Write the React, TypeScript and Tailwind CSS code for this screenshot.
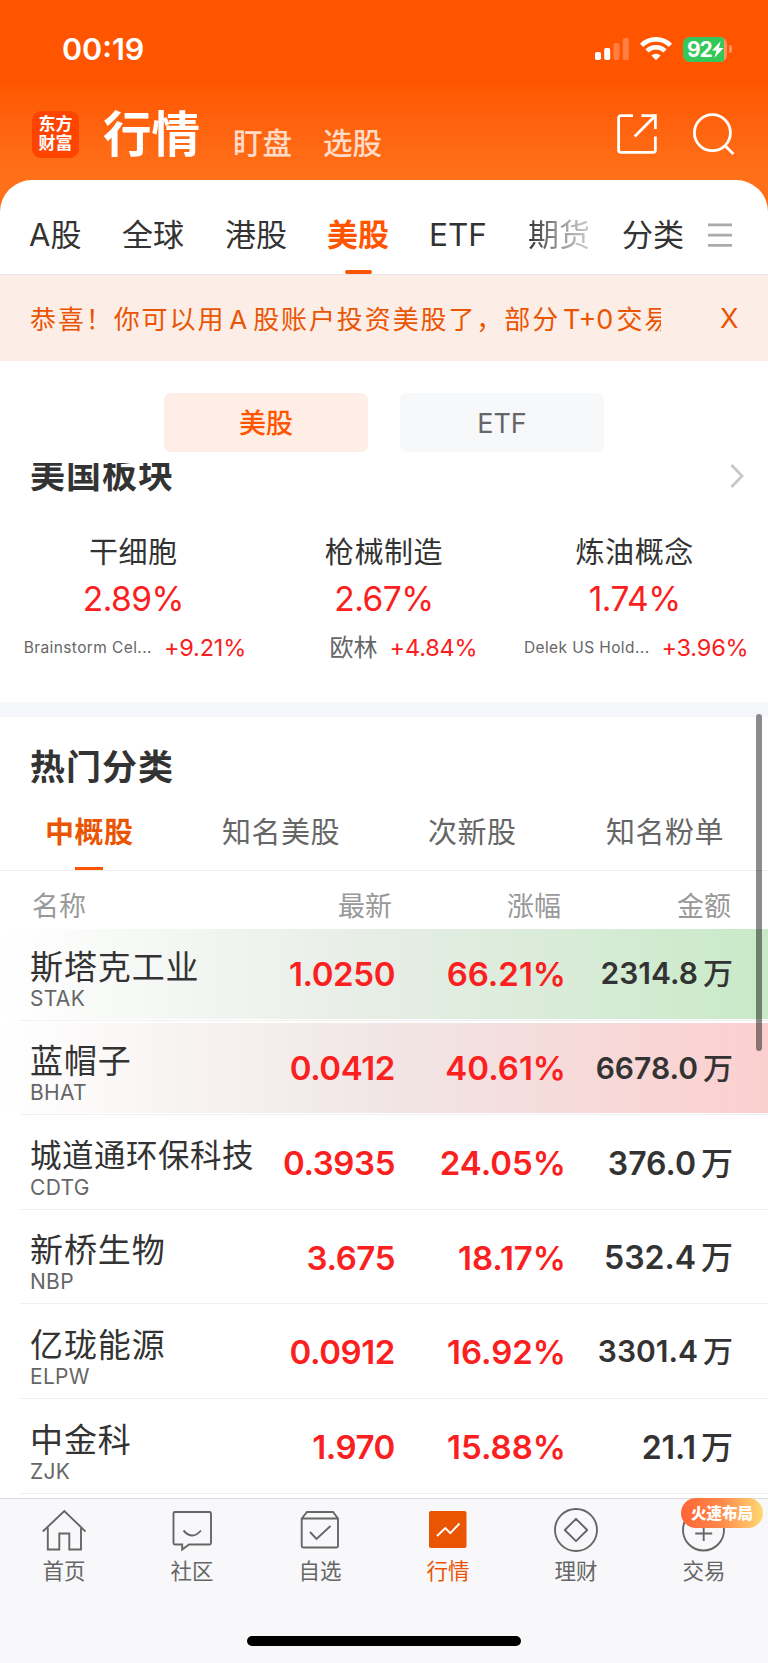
import React from "react";
import clsx from "clsx";

interface Sector {
  name: string;
  change: string;
  leader: string;
  leaderChange: string;
  smallLeader?: boolean;
}

interface Stock {
  name: string;
  code: string;
  price: string;
  change: string;
  amount: string;
  flash?: "up" | "down";
}

const sectors: Sector[] = [
  { name: "干细胞", change: "2.89%", leader: "Brainstorm Cel...", leaderChange: "+9.21%", smallLeader: true },
  { name: "枪械制造", change: "2.67%", leader: "欧林", leaderChange: "+4.84%" },
  { name: "炼油概念", change: "1.74%", leader: "Delek US Hold...", leaderChange: "+3.96%", smallLeader: true },
];

const stocks: Stock[] = [
  { name: "斯塔克工业", code: "STAK", price: "1.0250", change: "66.21%", amount: "2314.8", flash: "down" },
  { name: "蓝帽子", code: "BHAT", price: "0.0412", change: "40.61%", amount: "6678.0", flash: "up" },
  { name: "城道通环保科技", code: "CDTG", price: "0.3935", change: "24.05%", amount: "376.0" },
  { name: "新桥生物", code: "NBP", price: "3.675", change: "18.17%", amount: "532.4" },
  { name: "亿珑能源", code: "ELPW", price: "0.0912", change: "16.92%", amount: "3301.4" },
  { name: "中金科", code: "ZJK", price: "1.970", change: "15.88%", amount: "21.1" },
];

function StatusBar() {
  return (
    <div className="flex h-[98px] items-center justify-between pl-[62px] pr-9 text-white">
      <span className="text-[30.5px] font-semibold">00:19</span>
      <div className="flex items-center">
        <svg width="34" height="24" viewBox="0 0 34 24" fill="#fff">
          <rect x="0" y="15" width="6" height="8" rx="1.8" />
          <rect x="9.2" y="11" width="6" height="12" rx="1.8" />
          <rect x="18.5" y="6" width="6" height="17" rx="1.8" opacity=".25" />
          <rect x="27.8" y="1" width="6" height="22" rx="1.8" opacity=".25" />
        </svg>
        <svg className="ml-[11px]" width="32" height="24" viewBox="0 0 32 24" fill="none" stroke="#fff" strokeWidth="4.6">
          <path d="M1.6 8.3a20.5 20.5 0 0 1 28.8 0" />
          <path d="M7 13.9a12.8 12.8 0 0 1 18 0" />
          <path d="M16 23.2l-4.6-4.6a6.5 6.5 0 0 1 9.2 0z" fill="#fff" stroke="none" />
        </svg>
        <div className="ml-[11px] flex h-[25px] w-[44px] items-center overflow-hidden rounded-[7px] bg-[#ff9360]">
          <div className="flex h-full w-[41px] items-center bg-[#34c759] pl-[4px]">
            <span className="text-[21px] font-bold leading-none tracking-[-1.2px]">92</span>
            <svg className="ml-px" width="12" height="17" viewBox="0 0 12 17" fill="#fff">
              <path d="M9 0L0 9.6h4.6L2.6 17 12 7H7.2z" />
            </svg>
          </div>
        </div>
        <div className="ml-[2px] h-2 w-[3px] rounded-r-full bg-[#ff9360]" />
      </div>
    </div>
  );
}

function TitleBar() {
  return (
    <div className="flex h-[72px] items-center pl-8 pr-[33px] text-white">
      <div className="flex h-[47px] w-[47px] flex-col items-center justify-center rounded-[9px] bg-[#ff4400] text-[17px] font-bold leading-[19.5px]">
        <span>东方</span>
        <span>财富</span>
      </div>
      <h1 className="ml-[24px] mt-[2px] text-[48.5px] font-bold leading-none">行情</h1>
      <span className="ml-[33px] mt-[19px] text-[29.5px] font-medium leading-none text-[#ffdcc8]">盯盘</span>
      <span className="ml-[31px] mt-[19px] text-[29.5px] font-medium leading-none text-[#ffdcc8]">选股</span>
      <svg className="ml-auto" width="40" height="40" viewBox="0 0 40 40" fill="none" stroke="#fff" strokeWidth="2.8">
        <path d="M16 1.6H4A2.4 2.4 0 0 0 1.6 4v32A2.4 2.4 0 0 0 4 38.4h32a2.4 2.4 0 0 0 2.4-2.4V22.5" />
        <path d="M24.5 1.6h13.9V15M38 2L17.7 22.5" />
      </svg>
      <svg className="ml-[36px]" width="42" height="42" viewBox="0 0 42 42" fill="none" stroke="#fff" strokeWidth="2.8">
        <circle cx="19.4" cy="19.7" r="18" />
        <path d="M31.8 32.6l8.6 8.4" />
      </svg>
    </div>
  );
}

function MarketTabs() {
  return (
    <nav className="relative flex h-[95px] items-center border-b border-[#e5e5ea] pl-[29px] pt-[15px] text-[31px] leading-none text-[#333]">
      <span className="w-[93px]">A股</span>
      <span className="w-[103px]">全球</span>
      <span className="w-[102px]">港股</span>
      <span className="w-[102px] font-bold text-[#ff5500]">美股</span>
      <span className="w-[99px] text-[31.5px]">ETF</span>
      <span className="w-[94px]">
        <span className="bg-linear-to-r from-[#333] via-[#999] to-[#ccc] bg-clip-text text-transparent">期货</span>
      </span>
      <span className="w-[86px]">分类</span>
      <svg width="24" height="24" viewBox="0 0 24 24" stroke="#aaa" strokeWidth="2.8">
        <path d="M0 1.9h24M0 12.2h24M0 22.4h24" />
      </svg>
      <i className="absolute bottom-0 left-[345px] h-1 w-[27px] rounded-sm bg-[#ff5500]" />
    </nav>
  );
}

function PromoBanner() {
  return (
    <div className="flex h-[86px] items-center bg-[#fcede6] pl-[30px] pt-[3px] text-[#ea5504]">
      <p className="w-[631px] overflow-hidden whitespace-nowrap text-[26px] leading-[40px] tracking-[1.9px]">
        恭喜！你可以用<span className="mx-[4px]">A</span>股账户投资美股了，部分
        <span className="mx-[3px] text-[27px] tracking-[0px]">T+0</span>交易
      </p>
      <span className="ml-[59px] text-[27px]">X</span>
    </div>
  );
}

function SectorBoard() {
  return (
    <section className="h-[239px] overflow-hidden">
      <div className="-mt-[5px] flex h-[35px] items-center justify-between pl-[30px] pr-6">
        <h2 className="text-[35px] font-bold leading-[35px] tracking-[1px] text-[#333]">美国板块</h2>
        <svg width="14" height="26" viewBox="0 0 14 26" fill="none" stroke="#c8c8c8" strokeWidth="2.8">
          <path d="M1.5 2L12 13 1.5 24" />
        </svg>
      </div>
      <div className="mt-[39px] grid grid-cols-3 px-2 text-center">
        {sectors.map((s) => (
          <div key={s.name}>
            <div className="text-[29px] leading-[42px] tracking-[0.6px] text-[#333]">{s.name}</div>
            <div className="text-[33.5px] leading-[50px] tracking-[-0.5px] text-[#fa2020]">{s.change}</div>
            <div
              className={clsx(
                "mt-[4px] flex h-10 items-center justify-center whitespace-nowrap",
                s.smallLeader ? "pl-[3px]" : "pl-[39px]"
              )}
            >
              <span className={clsx("text-[#666]", s.smallLeader ? "text-[15.5px] tracking-[0.4px]" : "text-[24px]")}>
                {s.leader}
              </span>
              <span className="ml-[12px] text-[23.5px] tracking-[-0.2px] text-[#fa2020]">{s.leaderChange}</span>
            </div>
          </div>
        ))}
      </div>
    </section>
  );
}

function Cell({ className, children }: { className?: string; children: React.ReactNode }) {
  return <div className={clsx("whitespace-nowrap text-right font-semibold", className)}>{children}</div>;
}

function StockRow({ stock }: { stock: Stock }) {
  const longAmount = stock.amount.length > 5;
  return (
    <div className="relative h-[94.6px] pb-[2px] pt-[2.5px]">
      <div
        className={clsx(
          "grid h-full grid-cols-[264px_131px_171px_167px] items-center",
          stock.flash === "down" && "bg-linear-to-r from-white via-[#e6ede5] to-[#c8eac8]",
          stock.flash === "up" && "bg-linear-to-r from-white via-[#f0e6e5] to-[#fccfcf]"
        )}
      >
        <div className="pl-[30px] pt-[11px]">
          <div
            className={clsx(
              "whitespace-nowrap leading-[38px] text-[#333]",
              stock.name.length > 6 ? "text-[31.5px] tracking-[0.5px]" : "text-[33px] tracking-[0.9px]"
            )}
          >
            {stock.name}
          </div>
          <div className="pt-px text-[21px] leading-6 tracking-[0.3px] text-[#666]">{stock.code}</div>
        </div>
        <Cell className="pt-[2px] text-[33px] tracking-[-0.4px] text-[#fa2020]">{stock.price}</Cell>
        <Cell className="pt-[2px] text-[33px] text-[#fa2020]">{stock.change}</Cell>
        <Cell className={clsx("text-[#333]", longAmount ? "text-[30px]" : "pt-[2px] text-[32px]")}>
          {stock.amount}
          <span className="ml-[5px] font-medium">万</span>
        </Cell>
      </div>
      <div className="absolute bottom-0 left-5 right-0 h-px bg-[#f0f0f2]" />
    </div>
  );
}

function HotCategories() {
  return (
    <section className="h-[781px] overflow-hidden">
      <h2 className="pl-[30px] pt-[33px] text-[35px] font-bold leading-[35px] tracking-[1px] text-[#333]">热门分类</h2>
      <nav className="relative flex h-[86px] items-center border-b border-[#ececee] pl-[45px] pt-[11px] text-[29px] tracking-[0.5px] text-[#666]">
        <span className="w-[177px] font-bold text-[#ea5504]">中概股</span>
        <span className="w-[206px]">知名美股</span>
        <span className="w-[178px]">次新股</span>
        <span>知名粉单</span>
        <i className="absolute bottom-0 left-[75px] h-[3px] w-[28px] bg-[#ff5500]" />
      </nav>
      <div className="grid h-[55px] grid-cols-[240px_152px_169px_170px] items-center pt-[16px] text-right text-[27px] text-[#999]">
        <span className="pl-8 text-left">名称</span>
        <span>最新</span>
        <span>涨幅</span>
        <span>金额</span>
      </div>
      {stocks.map((s) => (
        <StockRow key={s.code} stock={s} />
      ))}
    </section>
  );
}

const tabs = [
  {
    label: "首页",
    icon: (
      <>
        <path d="M.8 23.5L22.3 3l21.2 20.5" />
        <path d="M5.8 19.5v22h11.5v-16h10v16H39v-22" />
      </>
    ),
  },
  {
    label: "社区",
    icon: (
      <>
        <path d="M5 4h34.5A1.5 1.5 0 0 1 41 5.5V35a1.5 1.5 0 0 1-1.5 1.5H19l-6.8 5v-5H5A1.5 1.5 0 0 1 3.5 35V5.5A1.5 1.5 0 0 1 5 4z" />
        <path d="M13.5 22.500q8.800 10 17.500 0" />
      </>
    ),
  },
  {
    label: "自选",
    icon: (
      <>
        <path d="M3.7 10.5L9 4h26l5 6.5V38a1.5 1.5 0 0 1-1.5 1.5H5.2A1.5 1.5 0 0 1 3.7 38zM3.7 10.5H40" />
        <path d="M12 24l6.5 7L32.5 18" />
      </>
    ),
  },
  {
    label: "行情",
    active: true,
    icon: (
      <>
        <rect x="3" y="3" width="37.5" height="37" rx="2" fill="#ea5504" stroke="none" />
        <path d="M11 28l8.3-8 5 5.2 9.200-9.700" stroke="#fff" />
      </>
    ),
  },
  {
    label: "理财",
    icon: (
      <>
        <circle cx="22" cy="22" r="21" />
        <path d="M22 10.8L33.2 22 22 33.2 10.8 22z" strokeLinejoin="round" />
      </>
    ),
  },
  {
    label: "交易",
    badge: "火速布局",
    icon: (
      <>
        <circle cx="21.5" cy="22" r="20.5" />
        <path d="M13.2 25.5h17M21.7 15v18" />
      </>
    ),
  },
];

function BottomBar() {
  return (
    <footer className="h-[165px] border-t border-[#dcdce0] bg-[#f8f8fb]">
      <div className="grid h-[137px] grid-cols-6">
        {tabs.map((t) => (
          <div
            key={t.label}
            className={clsx("relative flex flex-col items-center pt-[9px]", t.active ? "text-[#ea5504]" : "text-[#666]")}
          >
            <svg width="44" height="44" viewBox="0 0 44 44" fill="none" stroke={t.active ? "#ea5504" : "#666"} strokeWidth="1.9">
              {t.icon}
            </svg>
            <span className="mt-[4px] text-[21.5px] leading-[30px]">{t.label}</span>
            {t.badge && (
              <span className="absolute -top-px left-[41px] flex h-[30px] w-[82px] items-center justify-center rounded-full bg-linear-to-r from-[#ff6236] via-[#ff8a4a] to-[#ffd873] pt-px text-[15.5px] font-black text-white">
                {t.badge}
              </span>
            )}
          </div>
        ))}
      </div>
      <div className="mx-auto h-[10px] w-[274px] rounded-full bg-black" />
    </footer>
  );
}

export default function App() {
  return (
    <div className="relative h-[1663px] w-[768px] overflow-hidden bg-linear-to-b from-[#ff5500] from-[80px] to-[#ff7019] to-[175px] font-['Inter','Noto_Sans_CJK_SC',sans-serif]">
      <header className="h-[180px]">
        <StatusBar />
        <TitleBar />
      </header>
      <main className="overflow-hidden rounded-t-[32px] bg-white">
        <MarketTabs />
        <PromoBanner />
        <div className="flex h-[102px] justify-center gap-8 pt-8 text-[27px]">
          <button className="h-[59px] w-[204px] rounded-[7px] bg-[#ffeee5] pt-[3px] font-medium text-[#ff5500]">美股</button>
          <button className="h-[59px] w-[204px] rounded-[7px] bg-[#f7f8fa] pt-[3px] text-[#666]">ETF</button>
        </div>
        <SectorBoard />
        <div className="h-[15px] bg-[#f6f7fa]" />
        <HotCategories />
      </main>
      <BottomBar />
      {/* scroll indicator */}
      <div className="absolute left-[756px] top-[714px] h-[337px] w-[6px] rounded-full bg-black/45" />
    </div>
  );
}
